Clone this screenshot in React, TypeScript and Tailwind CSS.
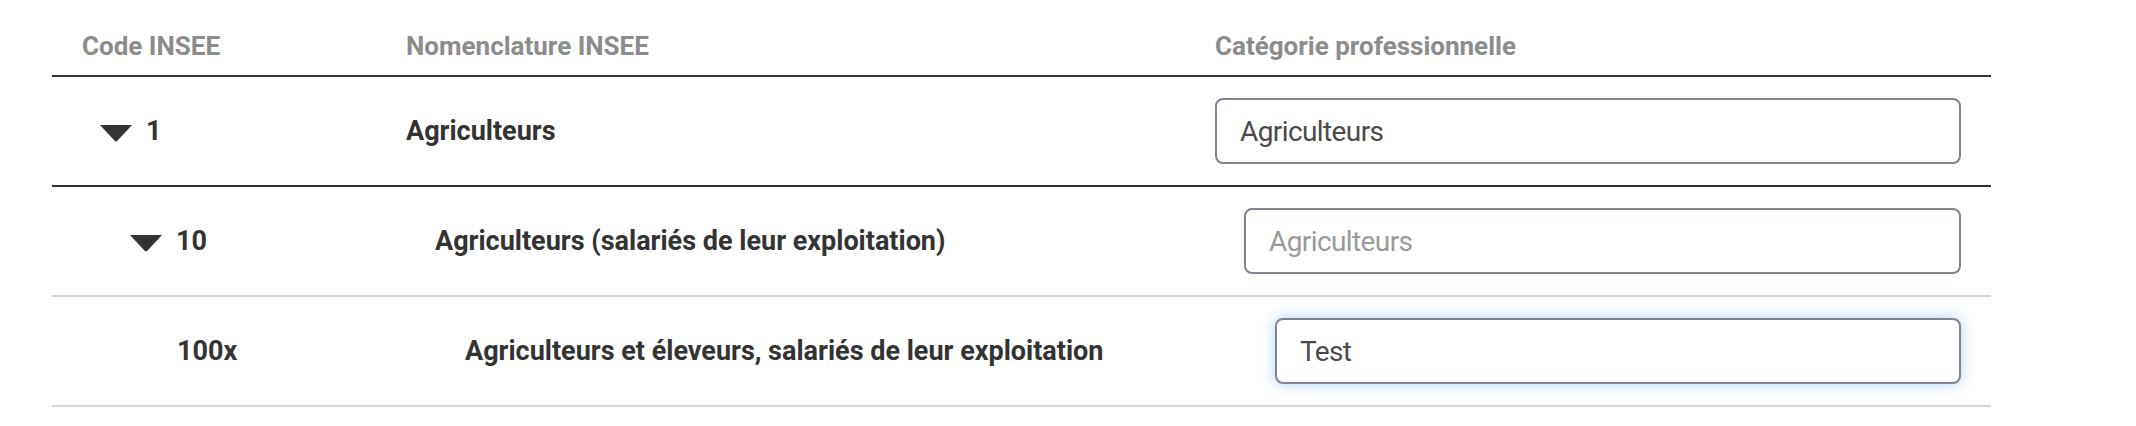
import React from "react";

function Caret() {
  return (
    <svg width="32" height="17" viewBox="0 0 32 17" className="shrink-0 translate-y-[2px]">
      <path d="M0 0 H32 L17.6 15.6 Q16 17.2 14.4 15.6 Z" fill="#333333" />
    </svg>
  );
}

type Row = {
  code: string;
  caret: boolean;
  label: string;
  value: string;
  placeholder?: string;
  codeCls: string;
  labelCls: string;
  inputWrapCls: string;
  rowCls: string;
  inputCls: string;
};

const rows: Row[] = [
  {
    code: "1",
    caret: true,
    label: "Agriculteurs",
    value: "Agriculteurs",
    codeCls: "pl-[48px]",
    labelCls: "pl-[30px]",
    inputWrapCls: "pl-[30px]",
    rowCls: "border-[#333333]",
    inputCls: "",
  },
  {
    code: "10",
    caret: true,
    label: "Agriculteurs (salariés de leur exploitation)",
    value: "",
    placeholder: "Agriculteurs",
    codeCls: "pl-[78px]",
    labelCls: "pl-[59px]",
    inputWrapCls: "pl-[59px]",
    rowCls: "border-[#d6d6d6]",
    inputCls: "",
  },
  {
    code: "100x",
    caret: false,
    label: "Agriculteurs et éleveurs, salariés de leur exploitation",
    value: "Test",
    codeCls: "pl-[125px]",
    labelCls: "pl-[89px]",
    inputWrapCls: "pl-[90px]",
    rowCls: "border-[#d6d6d6]",
    inputCls: "shadow-[0_0_14px_rgba(102,175,233,0.55)]",
  },
];

export default function App() {
  return (
    <div className="w-[2136px] h-[426px] bg-white font-['Roboto',sans-serif] overflow-hidden">
      <div className="ml-[52px] w-[1939px]">
        <div className="flex h-[77px] border-b-2 border-[#333333] text-[26px] font-bold leading-none text-[#8c8c8c]">
          <div className="w-[324px] pl-[30px] pt-[33px]">Code INSEE</div>
          <div className="w-[809px] pl-[30px] pt-[33px]">Nomenclature INSEE</div>
          <div className="flex-1 pl-[30px] pt-[33px]">Catégorie professionnelle</div>
        </div>
        {rows.map((r, i) => (
          <div key={i} className={`flex h-[110px] items-center border-b-2 ${r.rowCls}`}>
            <div className={`w-[324px] flex items-center ${r.codeCls}`}>
              {r.caret && <Caret />}
              <span className={`text-[27px] font-bold leading-none text-[#333333] ${r.caret ? "ml-[14px]" : ""}`}>
                {r.code}
              </span>
            </div>
            <div className={`w-[809px] text-[27px] font-bold leading-none text-[#333333] ${r.labelCls}`}>
              {r.label}
            </div>
            <div className={`flex-1 pr-[30px] ${r.inputWrapCls}`}>
              <input
                readOnly
                defaultValue={r.value}
                placeholder={r.placeholder}
                className={`block w-full h-[66px] rounded-[8px] border-2 border-[#7f8392] bg-white pl-[23px] text-[28px] tracking-[-0.6px] text-[#4a4a4a] placeholder:text-[#9a9a9a] outline-none ${r.inputCls}`}
              />
            </div>
          </div>
        ))}
      </div>
    </div>
  );
}
